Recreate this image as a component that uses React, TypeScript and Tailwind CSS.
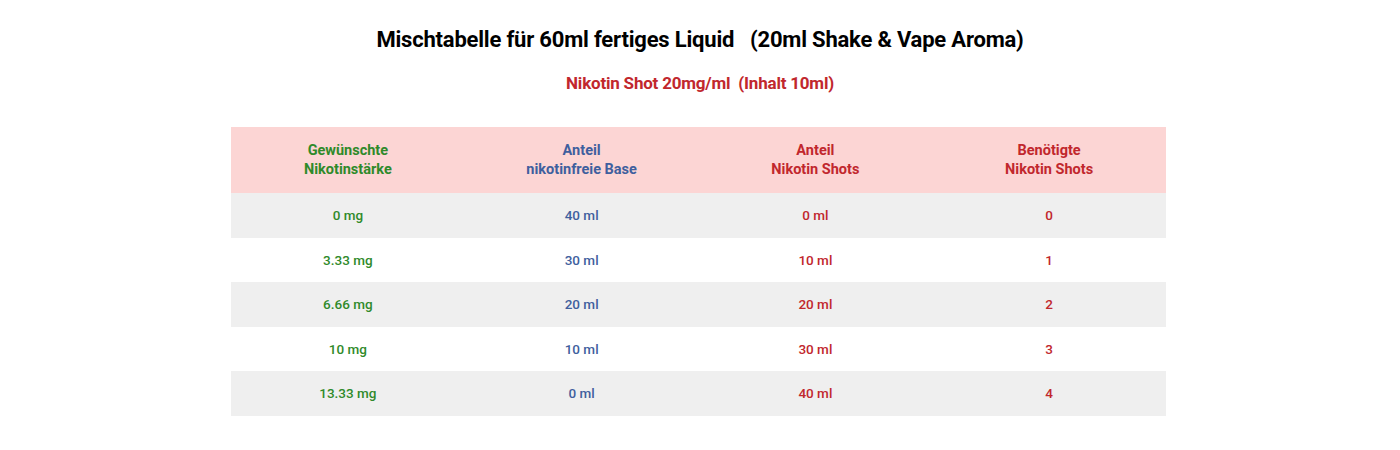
import React from "react";

const rows = [
  ["0 mg", "40 ml", "0 ml", "0"],
  ["3.33 mg", "30 ml", "10 ml", "1"],
  ["6.66 mg", "20 ml", "20 ml", "2"],
  ["10 mg", "10 ml", "30 ml", "3"],
  ["13.33 mg", "0 ml", "40 ml", "4"],
];

const colColors = ["text-[#2f8a2a]", "text-[#3f5f9e]", "text-[#c1272d]", "text-[#c1272d]"];

function App() {
  return (
    <div className="w-full h-[450px] bg-white flex flex-col items-center font-['Roboto',sans-serif]">
      <h1 className="mt-[27px] text-[22px] leading-[26px] font-bold text-black tracking-[-0.2px] whitespace-pre">
        Mischtabelle für 60ml fertiges Liquid   (20ml Shake &amp; Vape Aroma)
      </h1>
      <h2 className="mt-[19px] text-[17px] leading-[22px] font-bold text-[#c1272d] tracking-[-0.2px] whitespace-pre">
        Nikotin Shot 20mg/ml  (Inhalt 10ml)
      </h2>
      <table className="mt-[33px] mr-[3px] w-[935px] table-fixed border-collapse text-[13.5px] font-medium">
        <thead>
          <tr className="bg-[#fcd5d4] h-[66px] leading-[19px] text-[14.5px]">
            <th className={`font-bold ${colColors[0]}`}>Gewünschte<br />Nikotinstärke</th>
            <th className={`font-bold ${colColors[1]}`}>Anteil<br />nikotinfreie Base</th>
            <th className={`font-bold ${colColors[2]}`}>Anteil<br />Nikotin Shots</th>
            <th className={`font-bold ${colColors[3]}`}>Benötigte<br />Nikotin Shots</th>
          </tr>
        </thead>
        <tbody>
          {rows.map((r, i) => (
            <tr key={i} className={i % 2 === 0 ? "bg-[#efefef] h-[45px]" : "bg-white h-[44px]"}>
              {r.map((c, j) => (
                <td key={j} className={`text-center ${colColors[j]}`}>{c}</td>
              ))}
            </tr>
          ))}
        </tbody>
      </table>
    </div>
  );
}

export default App;
